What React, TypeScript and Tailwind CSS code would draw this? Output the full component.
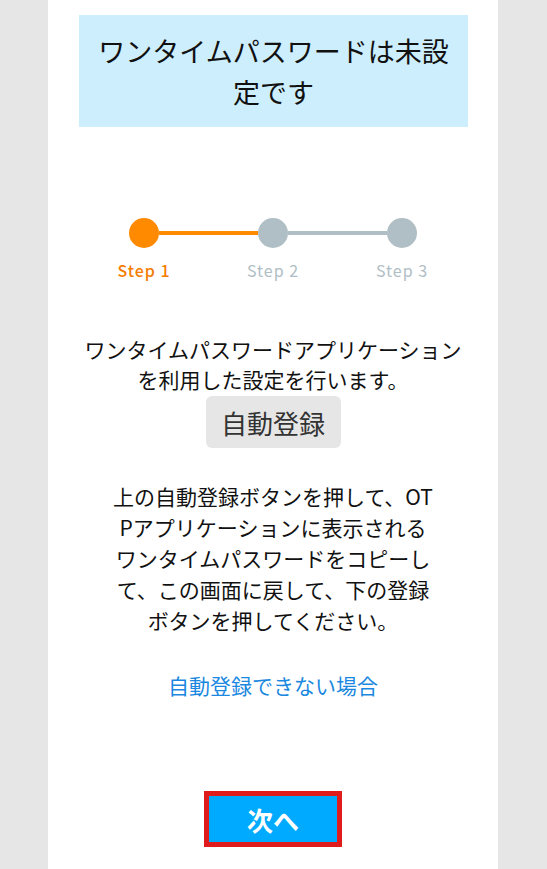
import React from "react";

const font = { fontFamily: '"Noto Sans CJK JP", "Noto Sans", sans-serif' };

export default function App() {
  return (
    <div className="w-[547px] h-[869px] bg-[#e6e6e6] overflow-hidden" style={font}>
      <div className="ml-[48px] w-[450px] h-[869px] bg-white flex flex-col items-center pt-[15px]">
        <div className="w-[389px] h-[112px] bg-[#cdeefd] ml-[1px] px-[12px] flex items-center justify-center text-center text-[27px] leading-[41px] text-[#111]">
          ワンタイムパスワードは未設定です
        </div>

        <div className="mt-[91px] flex items-center">
          <div className="w-[30px] h-[30px] rounded-full bg-[#ff8a00]" />
          <div className="w-[99px] h-[4px] bg-[#ff8a00]" />
          <div className="w-[30px] h-[30px] rounded-full bg-[#b0bec5]" />
          <div className="w-[99px] h-[4px] bg-[#b0bec5]" />
          <div className="w-[30px] h-[30px] rounded-full bg-[#b0bec5]" />
        </div>
        <div className="mt-[12px] grid grid-cols-3 w-[387px] text-center text-[16px] leading-[20px] tracking-[1px]">
          <div className="text-[#f57c00] font-medium">Step 1</div>
          <div className="text-[#b0bec5]">Step 2</div>
          <div className="text-[#b0bec5]">Step 3</div>
        </div>

        <div className="mt-[54px] w-[395px] text-center text-[21px] leading-[30px] text-[#111]">
          ワンタイムパスワードアプリケーションを利用した設定を行います。
        </div>
        <button className="mt-[2px] w-[135px] h-[52px] rounded-[6px] bg-[#e6e6e6] text-[26px] text-[#333] flex items-center justify-center">
          自動登録
        </button>

        <div className="mt-[33px] w-[322px] text-center text-[21px] leading-[31px] text-[#111] break-all">
          上の自動登録ボタンを押して、OTPアプリケーションに表示されるワンタイムパスワードをコピーして、この画面に戻して、下の登録ボタンを押してください。
        </div>

        <div className="mt-[34px] text-[21px] leading-[30px] text-[#1a88e0]">
          自動登録できない場合
        </div>

        <button className="mt-[91px] w-[138px] h-[56px] border-[5px] border-[#e01b1b] bg-[#00aaff] text-white text-[26px] font-bold flex items-center justify-center">
          次へ
        </button>
      </div>
    </div>
  );
}
